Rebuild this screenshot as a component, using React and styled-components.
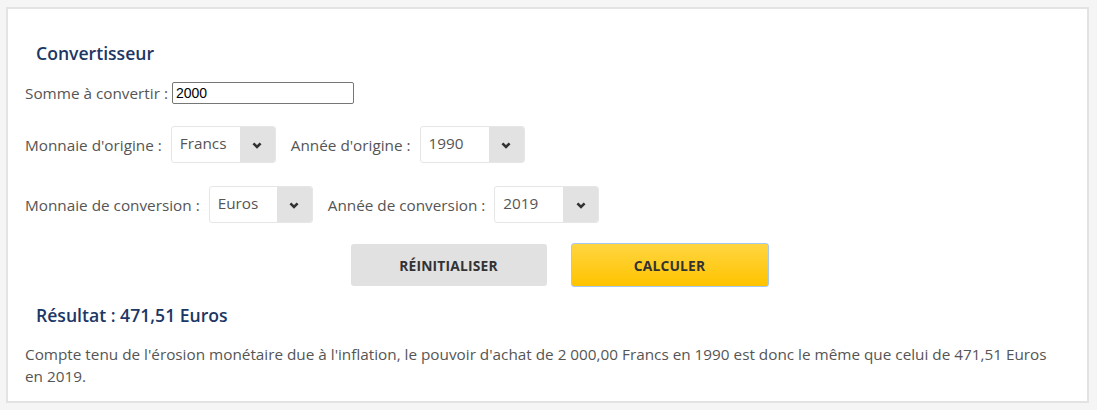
import React, { useState } from "react";
import styled, { createGlobalStyle } from "styled-components";

const GlobalStyle = createGlobalStyle`
  body {
    margin: 0;
    background: #f5f5f5;
    font-family: "Open Sans", "Liberation Sans", sans-serif;
  }
`;

const Card = styled.section`
  margin: 7px 8px 8px 6px;
  padding: 32px 30px 14px 17px;
  background: #fff;
  border: 2px solid #e3e3e3;
  color: #555;
  font-size: 15.3px;
  line-height: 22px;
`;

const Title = styled.h2`
  margin: 0 0 ${(p) => p.$gap || 0}px 11px;
  font-size: 17.6px;
  line-height: 24px;
  font-weight: 600;
  color: #1c3765;
`;

const Row = styled.div`
  display: flex;
  align-items: center;
  margin-bottom: ${(p) => p.$gap || 0}px;
`;

const Label = styled.label`
  margin-right: ${(p) => p.$space || 8}px;
  white-space: nowrap;
`;

const NumberInput = styled.input`
  box-sizing: border-box;
  width: 182px;
  height: 22px;
  padding: 1px 3px;
  border: 1px solid #767676;
  border-radius: 2px;
  font-family: "Liberation Sans", Arial, sans-serif;
  font-size: 14px;
  color: #000;
`;

const SelectBox = styled.div`
  box-sizing: border-box;
  display: flex;
  width: ${(p) => p.$width || 104}px;
  height: 37px;
  margin-right: 15px;
  border: 1px solid #e6e6e6;
  border-radius: 3px;
  overflow: hidden;
  background: #fff;
`;

const Select = styled.select`
  flex: 1;
  min-width: 0;
  appearance: none;
  border: none;
  outline: none;
  background: transparent;
  padding: 0 0 4px 8px;
  font-family: "Open Sans", "Liberation Sans", sans-serif;
  font-size: 15.3px;
  color: #555;
`;

const ArrowBox = styled.span`
  display: flex;
  align-items: center;
  justify-content: center;
  width: 35px;
  padding-top: 1px;
  background: #e2e2e2;
  color: #333;
`;

const Buttons = styled.div`
  display: flex;
  justify-content: center;
  gap: 24px;
  padding-left: 37px;
  margin-bottom: 16px;
`;

const Button = styled.button`
  box-sizing: border-box;
  width: ${(p) => (p.$primary ? 198 : 196)}px;
  height: ${(p) => (p.$primary ? 44 : 42)}px;
  margin-top: ${(p) => (p.$primary ? -1 : 0)}px;
  border: ${(p) => (p.$primary ? "1px solid #a7c8ef" : "none")};
  border-radius: 3px;
  background: ${(p) =>
    p.$primary ? "linear-gradient(#ffd541, #ffc400)" : "#e1e1e1"};
  font-family: "Open Sans", "Liberation Sans", sans-serif;
  font-size: 13.8px;
  font-weight: 700;
  letter-spacing: 0.2px;
  color: #333;
  text-transform: uppercase;
  cursor: pointer;
`;

const Text = styled.p`
  margin: 0;
`;

const Chevron = () => (
  <svg width="10" height="7" viewBox="0 0 10 7">
    <path d="M1.4 1.4 L5 5 L8.6 1.4" fill="none" stroke="currentColor" strokeWidth="2.6" />
  </svg>
);

const Dropdown = ({ label, value, options, width, space }) => (
  <>
    <Label $space={space}>{label}</Label>
    <SelectBox $width={width}>
      <Select defaultValue={value}>
        {options.map((o) => (
          <option key={o}>{o}</option>
        ))}
      </Select>
      <ArrowBox>
        <Chevron />
      </ArrowBox>
    </SelectBox>
  </>
);

const monnaies = ["Francs", "Euros"];

export default function App() {
  const [somme, setSomme] = useState("2000");
  return (
    <>
      <GlobalStyle />
      <Card>
        <Title $gap={17}>Convertisseur</Title>
        <Row $gap={22}>
          <Label $space={4}>Somme à convertir :</Label>
          <NumberInput value={somme} onChange={(e) => setSomme(e.target.value)} />
        </Row>
        <Row $gap={23}>
          <Dropdown label="Monnaie d'origine :" value="Francs" options={monnaies} width={105} space={9} />
          <Dropdown label="Année d'origine :" value="1990" options={["1990", "2000", "2019"]} width={105} space={9} />
        </Row>
        <Row $gap={21}>
          <Dropdown label="Monnaie de conversion :" value="Euros" options={monnaies} width={104} space={9} />
          <Dropdown label="Année de conversion :" value="2019" options={["1990", "2000", "2019"]} width={105} space={9} />
        </Row>
        <Buttons>
          <Button>Réinitialiser</Button>
          <Button $primary>Calculer</Button>
        </Buttons>
        <Title $gap={16}>Résultat : 471,51 Euros</Title>
        <Text>
          Compte tenu de l'érosion monétaire due à l'inflation, le pouvoir d'achat de 2 000,00 Francs en 1990
          est donc le même que celui de 471,51 Euros en 2019.
        </Text>
      </Card>
    </>
  );
}
